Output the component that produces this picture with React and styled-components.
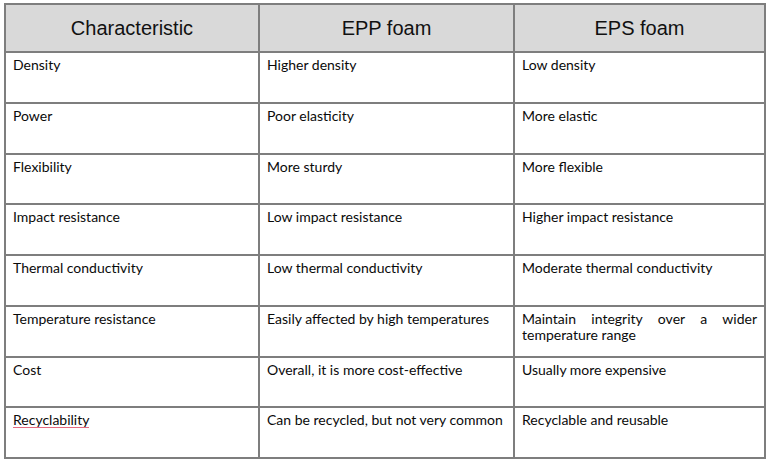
import React from "react";
import styled, {createGlobalStyle} from "styled-components";

const GlobalStyle = createGlobalStyle`
  body {
    margin: 0;
    background: #fff;
  }
`;

const Page = styled.div`
  padding: 3px 0 0 4px;
  width: 771px;
  height: 462px;
  box-sizing: border-box;
  overflow: hidden;
`;

const Table = styled.table`
  border-collapse: collapse;
  table-layout: fixed;
  width: 760px;
  color: #111;
`;

const HeadCell = styled.th`
  height: 46px;
  padding: 0;
  background: #d9d9d9;
  border: 2px solid #7e7e7e;
  font-family: "Liberation Sans", Arial, sans-serif;
  font-size: 20px;
  font-weight: normal;
  text-align: center;
  vertical-align: middle;
`;

const Cell = styled.td`
  height: 44.75px;
  padding: 4px 7px 0 7px;
  border: 2px solid #7e7e7e;
  font-family: Lato, "Open Sans", sans-serif;
  font-size: 14px;
  line-height: 16px;
  color: #0a0a0a;
  vertical-align: top;
  text-align: ${p => p.$justify ? "justify" : "left"};
`;

// spell-check squiggle under the word, as in the word processor capture
const Misspelled = styled.span`
  display: inline-block;
  line-height: 14px;
  border-bottom: 1px solid #e46a80;
`;

const rows = [
  ["Density", "Higher density", "Low density"],
  ["Power", "Poor elasticity", "More elastic"],
  ["Flexibility", "More sturdy", "More flexible"],
  ["Impact resistance", "Low impact resistance", "Higher impact resistance"],
  ["Thermal conductivity", "Low thermal conductivity", "Moderate thermal conductivity"],
  ["Temperature resistance", "Easily affected by high temperatures", "Maintain integrity over a wider temperature range"],
  ["Cost", "Overall, it is more cost-effective", "Usually more expensive"],
  ["Recyclability", "Can be recycled, but not very common", "Recyclable and reusable"]
];

export default function App() {
  return <Page>
    <GlobalStyle/>
    <Table>
      <colgroup>
        <col style={{width: 254}}/>
        <col style={{width: 255}}/>
        <col style={{width: 251}}/>
      </colgroup>
      <thead>
      <tr>
        <HeadCell>Characteristic</HeadCell>
        <HeadCell>EPP foam</HeadCell>
        <HeadCell>EPS foam</HeadCell>
      </tr>
      </thead>
      <tbody>
      {rows.map(([name, epp, eps]) => <tr key={name}>
        <Cell>{name === "Recyclability" ? <Misspelled>{name}</Misspelled> : name}</Cell>
        <Cell>{epp}</Cell>
        <Cell $justify={eps.length > 40}>{eps}</Cell>
      </tr>)}
      </tbody>
    </Table>
  </Page>;
}
